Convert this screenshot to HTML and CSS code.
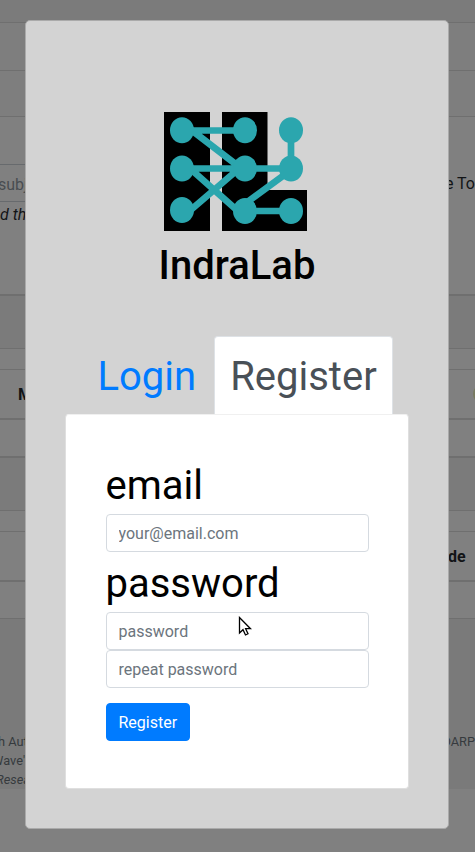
FILE: index.html
```
<!DOCTYPE html>
<html lang="en">
<head>
<meta charset="utf-8">
<title>IndraLab</title>
<link rel="stylesheet" href="styles.css">
</head>
<body>
<div class="page">
  <div class="row shade h22"></div>
  <div class="row line light h48"></div>
  <div class="row line light h46"></div>
  <div class="row line h48"></div>
  <div class="row h38"><span class="search">subj</span><span class="tool">e To</span></div>
  <div class="row h92"><span class="hint">d th</span></div>
  <div class="row thick shade h54"></div>
  <div class="row line h21"></div>
  <div class="row line h49"><b class="colname">M</b><span class="badge"></span></div>
  <div class="row thick h38"></div>
  <div class="row thick shade h54"></div>
  <div class="row line h21"></div>
  <div class="row line h49"><b class="code">de</b></div>
  <div class="row thick h38"></div>
  <div class="row line footer">
    <div class="funding"><span class="left">h Aut</span><span class="darpa">DARP</span></div>
    <div class="funding"><span class="wave">Wave"</span></div>
    <div class="funding"><i class="resea">Resea</i></div>
  </div>
</div>
<div class="modal">
  <svg class="logo" viewBox="0 0 143 119" width="143" height="119">
    <path d="M0 0H46V119H0ZM58 0H103.500V78H143V119H58Z"/>
    <g stroke="#2ba6ae" stroke-width="6.700" fill="none">
      <path d="M18 18.500H81M18 56.500H127M81 99H127M127 18V57M26 17L78 57M26 56.500L75 100M22 102L78 54M78 94L127 58"/>
    </g>
    <g fill="#2ba6ae">
      <ellipse cx="18" cy="18.300" rx="12" ry="13"/><ellipse cx="81" cy="18.300" rx="12" ry="13"/><ellipse cx="127" cy="18.300" rx="12" ry="13"/>
      <ellipse cx="18" cy="56.500" rx="12" ry="13"/><ellipse cx="81" cy="56.500" rx="12" ry="13"/><ellipse cx="127" cy="56.500" rx="12" ry="13"/>
      <ellipse cx="18" cy="98" rx="12" ry="13"/><ellipse cx="81" cy="99" rx="12" ry="13"/><ellipse cx="127" cy="99" rx="12" ry="13"/>
    </g>
  </svg>
  <h1>IndraLab</h1>
  <nav class="tabs"><a class="tab">Login</a><a class="tab active">Register</a></nav>
  <form class="card">
    <label>email</label>
    <input type="email" placeholder="your@email.com">
    <label>password</label>
    <input type="password" placeholder="password">
    <input type="password" placeholder="repeat password">
    <button type="button">Register</button>
  </form>
</div>
<svg class="cursor" width="14" height="21" viewBox="0 0 14 21"><path d="M1.500 1.500V17L5 13.700L7.500 19L10 17.800L7.600 12.700H12.500Z" fill="#fff" stroke="#000" stroke-width="1.300"/></svg>
</body>
</html>
```
FILE: styles.css
```
* { box-sizing: border-box; }
body {
  margin: 0;
  height: 852px;
  overflow: hidden;
  background: #808080;
  font: 16px/1.5 Roboto, sans-serif;
  color: #000;
}
.page { height: 852px; overflow: hidden; color: #121416; }
.row { display: flex; white-space: nowrap; overflow: hidden; }
.line { border-top: 1px solid #6f6f6f; }
.thick { border-top: 2px solid #6f6f6f; }
.shade { background: #7b7b7b; }
.light { background: #7e7e7e; }
.h21 { height: 21px; }
.h22 { height: 22px; }
.h38 { height: 38px; }
.h46 { height: 46px; }
.h48 { height: 48px; }
.h49 { height: 49px; }
.h54 { height: 54px; }
.h92 { height: 92px; }
.search {
  width: 42px;
  height: 38px;
  margin-left: -2px;
  padding-top: 8px;
  border: solid #676a6d;
  border-width: 1px 0;
  color: #494d51;
}
.tool { margin: 8px 0 0 408px; }
.hint { padding-top: 1px; font-style: italic; }
.colname { margin: 13px 0 0 18px; font-weight: 700; }
.badge { width: 20px; height: 20px; margin: 14px 0 0 441px; flex: none; border-radius: 10px; background: #77795f; }
.code { margin: 13px 0 0 448px; font-weight: 700; }
.footer {
  flex-direction: column;
  height: 171px;
  padding-top: 113px;
  background: #7a7a7a;
  color: #363a3e;
  font-size: 12.8px;
}
.funding { display: flex; height: 19.2px; line-height: 19.2px; }
.left { width: 42px; margin-left: -2px; }
.darpa { margin-left: 406px; }
.wave { margin-left: -8px; }
.resea { margin-left: -4px; }
.modal {
  position: absolute;
  left: 25px;
  top: 20px;
  width: 424px;
  height: 809px;
  padding: 91px 39px 39px;
  display: flex;
  flex-direction: column;
  background: #d3d3d3;
  border: 1px solid #aaa;
  border-radius: 5px;
}
.logo { display: block; flex: none; margin-left: 99px; }
h1 {
  margin: 11px 0 46px;
  font-size: 40px;
  font-weight: 500;
  line-height: 48px;
  text-align: center;
}
.tabs { display: flex; height: 78px; padding-left: 16px; }
.tab {
  height: 78px;
  padding: 10px 15.5px 6px;
  border: 1px solid transparent;
  border-bottom: 0;
  border-radius: 4px 4px 0 0;
  font-size: 40px;
  line-height: 60px;
  color: #007bff;
}
.active { margin-left: 1px; background: #fff; border-color: #dee2e6; color: #495057; }
.card {
  height: 375px;
  padding: 39px 39.5px;
  display: flex;
  flex-direction: column;
  align-items: stretch;
  background: #fff;
  border: 1px solid #dfdfdf;
  border-top-color: #f0f0f0;
  border-radius: 4px;
}
label { display: block; height: 60px; padding-top: 2px; font-size: 40px; line-height: 60px; }
input {
  display: block;
  height: 38px;
  padding: 6px 12px;
  border: 1px solid #d5dae0;
  border-radius: 4px;
  font: inherit;
}
input::placeholder { color: #6c757d; opacity: 1; }
button {
  align-self: flex-start;
  height: 38px;
  margin-top: 15px;
  padding: 7px 12px 5px;
  border: 1px solid #007bff;
  border-radius: 4px;
  background: #007bff;
  color: #fff;
  font: inherit;
}
.cursor { position: absolute; left: 238px; top: 616px; }
```
